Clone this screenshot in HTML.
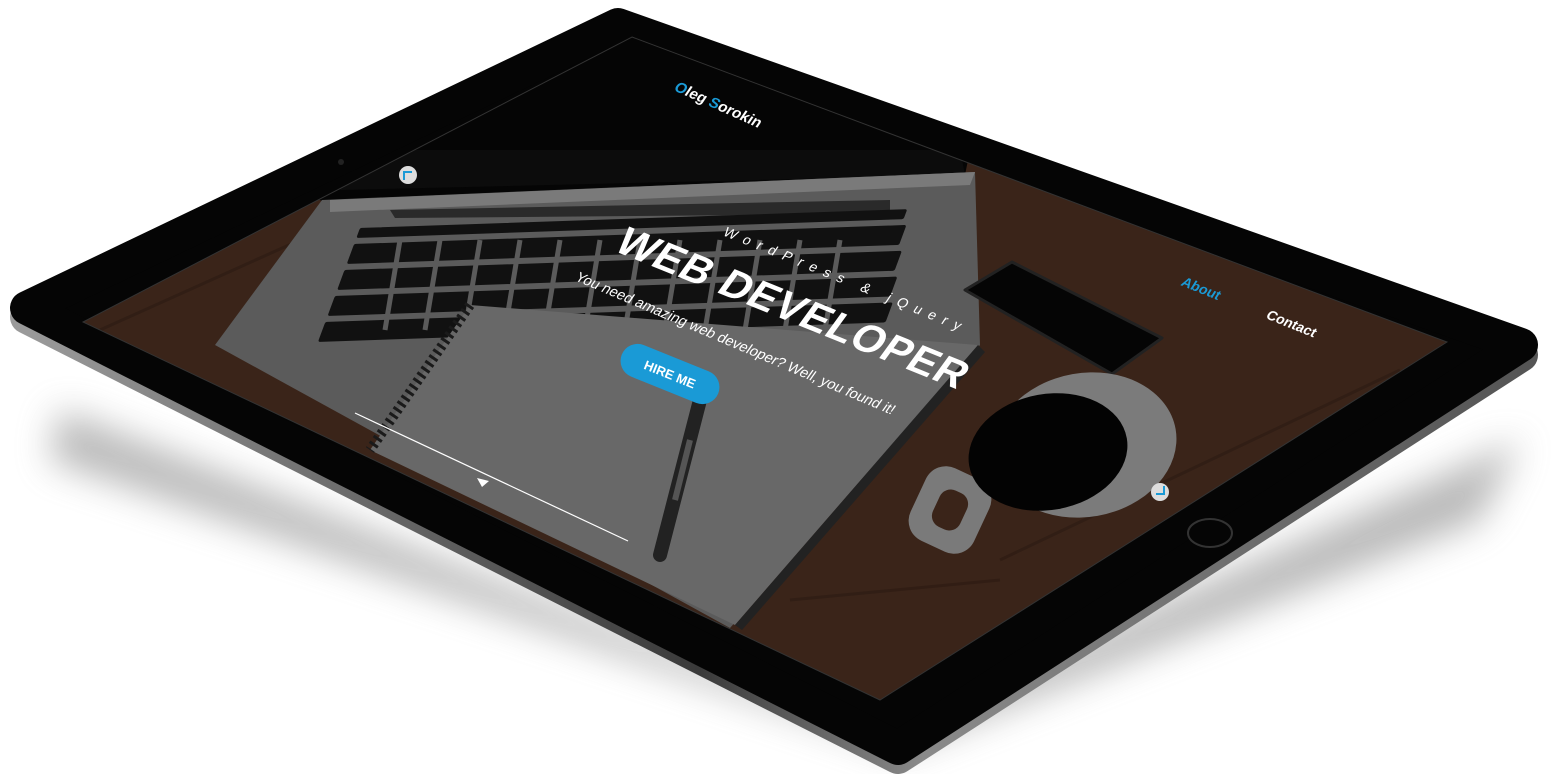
<!DOCTYPE html>
<html><head><meta charset="utf-8"><style>
html,body{margin:0;padding:0;background:#fff;width:1561px;height:774px;overflow:hidden}
svg{display:block}
text{font-family:"Liberation Sans",sans-serif}
</style></head><body>
<svg width="1561" height="774" viewBox="0 0 1561 774" xmlns="http://www.w3.org/2000/svg">
<defs>
<filter id="bl" x="-20%" y="-20%" width="140%" height="140%"><feGaussianBlur stdDeviation="18"/></filter>
<clipPath id="scr"><polygon points="632,37 1447,342 880,700 83,322"/></clipPath>
<linearGradient id="sil" x1="0" y1="0" x2="1" y2="0">
<stop offset="0" stop-color="#9a9a9a"/><stop offset="0.45" stop-color="#3a3a3a"/><stop offset="0.6" stop-color="#8a8a8a"/><stop offset="1" stop-color="#555"/></linearGradient>
</defs>
<polygon points="60,410 880,730 1520,440 1480,520 900,750 50,460" fill="#8a8a8a" filter="url(#bl)" opacity="0.6"/>
<path d="M618,25 L1521,350 L898,752 L27,312 Z" fill="url(#sil)" stroke="url(#sil)" stroke-width="34" stroke-linejoin="round" transform="translate(0,5)"/>
<path d="M618,25 L1521,345 L898,748 L27,308 Z" fill="#050505" stroke="#050505" stroke-width="34" stroke-linejoin="round"/>
<circle cx="341" cy="162" r="3" fill="#222"/>
<ellipse cx="1210" cy="533" rx="22" ry="14" fill="#050505" stroke="#333" stroke-width="2"/>
<g clip-path="url(#scr)">
<rect x="0" y="0" width="1561" height="774" fill="#3a2419"/>
<g stroke="#2c1a12" stroke-width="3" fill="none" opacity="0.6">
<path d="M1000,560 L1400,370"/><path d="M790,600 L1000,580"/><path d="M100,330 L300,240"/>
</g>
<polygon points="632,37 968,160 962,190 330,205 312,196" fill="#050505"/>
<polygon points="360,150 960,150 965,175 340,190" fill="#0c0c0c"/>
<polygon points="322,200 975,172 980,345 730,628 215,345" fill="#5b5b5b"/>
<polygon points="330,200 975,172 970,185 330,212" fill="#7a7a7a"/>
<polygon points="390,210 890,200 890,214 395,218" fill="#2a2a2a"/>
<g fill="#111">
<g transform="translate(360,228) skewX(-22) rotate(-2)">
<rect x="0" y="0" width="540" height="10" rx="2"/>
<rect x="0" y="16" width="545" height="20" rx="2"/>
<rect x="0" y="42" width="550" height="20" rx="2"/>
<rect x="0" y="68" width="555" height="20" rx="2"/>
<rect x="0" y="94" width="560" height="20" rx="2"/>
</g>
</g>
<g stroke="#5b5b5b" stroke-width="5">
<path d="M400,240 L385,330"/><path d="M440,240 L425,330"/><path d="M480,240 L465,330"/><path d="M520,240 L505,330"/><path d="M560,240 L545,330"/><path d="M600,240 L585,330"/><path d="M640,240 L625,330"/><path d="M680,240 L665,330"/><path d="M720,240 L705,330"/><path d="M760,240 L745,330"/><path d="M800,240 L785,330"/><path d="M840,240 L825,330"/>
</g>
<polygon points="470,305 978,345 735,625 370,450" fill="#686868"/>
<polygon points="978,345 985,352 742,630 735,625" fill="#222"/>
<path d="M470,305 L370,450" stroke="#1a1a1a" stroke-width="10" stroke-dasharray="3 4"/>
<path d="M700,400 L660,555" stroke="#222" stroke-width="14" stroke-linecap="round"/>
<path d="M690,440 L675,500" stroke="#555" stroke-width="6"/>
<polygon points="1012,262 1162,338 1112,374 965,290" fill="#050505" stroke="#222" stroke-width="3" stroke-linejoin="round"/>
<g transform="rotate(25 950 510)"><rect x="915" y="470" width="70" height="80" rx="22" fill="#7a7a7a"/><rect x="935" y="490" width="30" height="40" rx="12" fill="#3a2419"/></g>
<ellipse cx="1085" cy="445" rx="92" ry="72" fill="#7b7b7b" transform="rotate(-10 1085 445)"/>
<ellipse cx="1048" cy="452" rx="80" ry="58" fill="#030303" transform="rotate(-10 1048 452)"/>
</g>
<polygon points="632,37 1447,342 880,700 83,322" fill="none" stroke="#333" stroke-width="1"/>
<text transform="translate(673,90) rotate(24) skewX(-10)" font-size="15" font-weight="bold" fill="#fff"><tspan fill="#1a9ad6">O</tspan>leg <tspan fill="#1a9ad6">S</tspan>orokin</text>
<text transform="translate(722,235) rotate(22) skewX(-12)" font-size="14" fill="#fff" letter-spacing="7.5">WordPress &amp; jQuery</text>
<text transform="translate(612,250) rotate(22) skewX(-14)" font-size="41" font-weight="bold" fill="#fff" letter-spacing="1">WEB DEVELOPER</text>
<text transform="translate(574,280) rotate(23) skewX(-12)" font-size="14.5" fill="#fff">You need amazing web developer? Well, you found it!</text>
<g transform="translate(670,374) rotate(22)">
<rect x="-52" y="-17" width="104" height="34" rx="17" fill="#1a9ad6"/>
<text x="0" y="5" text-anchor="middle" font-size="13" font-weight="bold" fill="#fff">HIRE ME</text>
</g>
<text transform="translate(1180,285) rotate(22) skewX(-10)" font-size="14" font-weight="bold" fill="#1a9ad6">About</text>
<text transform="translate(1265,318) rotate(22) skewX(-10)" font-size="14" font-weight="bold" fill="#fff">Contact</text>
<line x1="355" y1="413" x2="628" y2="541" stroke="#fff" stroke-width="1.2"/>
<polygon points="477,478 489,481 482,487" fill="#fff"/>
<circle cx="408" cy="175" r="9" fill="#ddd"/>
<path d="M404,180 L404,172 L412,172" stroke="#1a9ad6" stroke-width="2" fill="none"/>
<circle cx="1160" cy="492" r="9" fill="#ddd"/>
<path d="M1156,494 L1164,494 L1164,486" stroke="#1a9ad6" stroke-width="2" fill="none"/>
</svg>
</body></html>
